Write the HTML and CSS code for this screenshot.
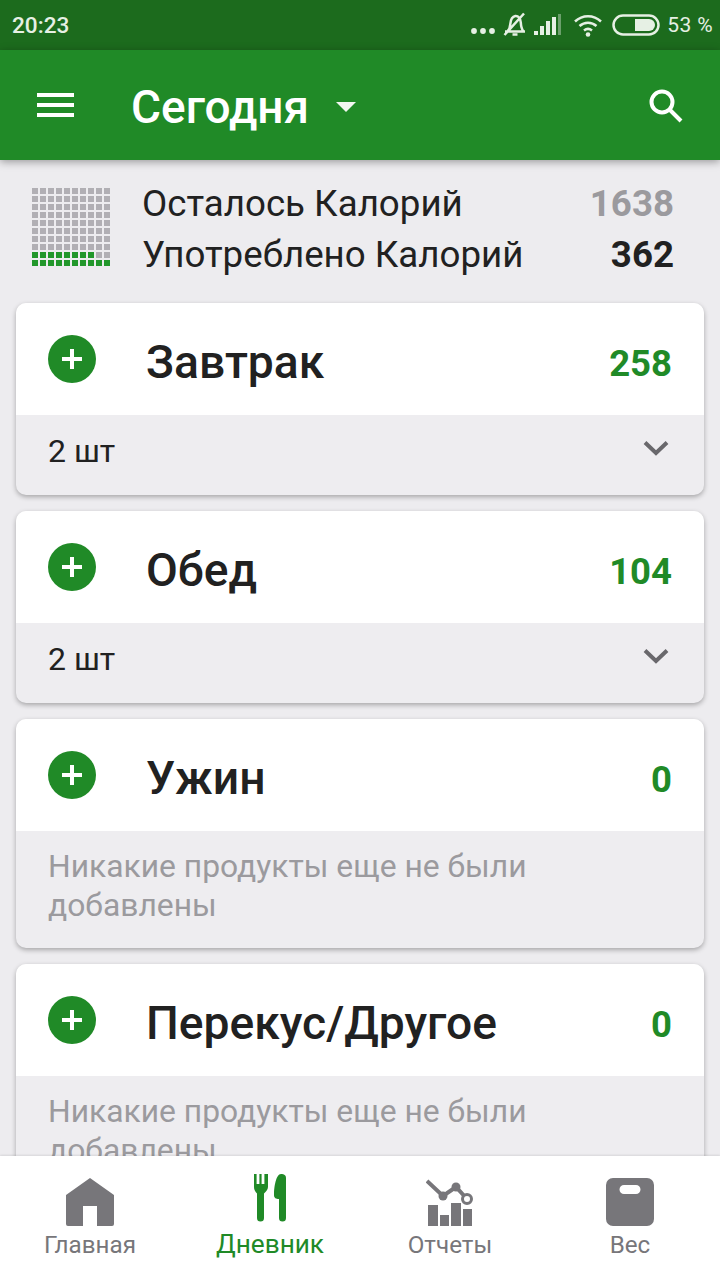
FILE: index.html
```html
<!DOCTYPE html>
<html lang="ru">

<head>
    <meta charset="UTF-8">
    <meta name="viewport" content="width=device-width, initial-scale=1.0">
    <title>Сегодня</title>
    <link rel="stylesheet" href="styles.css">
</head>

<body>
    <div class="statusbar">
        <span class="clock">20:23</span>
        <div class="status-icons">
            <svg class="dots" width="26" height="10" viewBox="0 0 26 10"><circle cx="4" cy="5" r="2.900"/><circle cx="13" cy="5" r="2.900"/><circle cx="22" cy="5" r="2.900"/></svg>
            <svg class="bell" width="24" height="26" viewBox="0 0 24 26"><path d="M2 19.500h20M4.500 19.500c2-2 2.500-4 2.800-7.500.4-4.500 2-7.500 5-8 3-.3 5.200 2 5.500 6.500.2 3.800 1 7 2.700 9M9.500 22.500h5M1.500 23 21 1.500"/></svg>
            <svg class="signal" width="28" height="22" viewBox="0 0 28 22"><rect x="0" y="17" width="4" height="4"/><rect x="6" y="12" width="4" height="9"/><rect x="12" y="7" width="4" height="14"/><rect x="18" y="3" width="4" height="18"/><rect x="24" y="0" width="3" height="21" opacity=".4"/></svg>
            <svg class="wifi" width="30" height="24" viewBox="0 0 30 24"><path d="M2 8.500c7.500-7 18.500-7 26 0M6.500 13c5-4.500 12-4.500 17 0M11 17.500c2.500-2 5.500-2 8 0"/><circle cx="15" cy="21.500" r="2.300" class="wifi-dot"/></svg>
            <svg class="battery" width="48" height="22" viewBox="0 0 48 22"><rect x="1.500" y="1.500" width="45" height="19" rx="9.500"/><path class="battery-fill" d="M23 5h14a6 6 0 0 1 0 12H23z"/></svg>
            <span class="battery-text">53 %</span>
        </div>
    </div>

    <header class="appbar">
        <svg class="menu-icon" width="37" height="24" viewBox="0 0 37 24"><rect y="0" width="37" height="4"/><rect y="10" width="37" height="4"/><rect y="20" width="37" height="4"/></svg>
        <h1 class="appbar-title">Сегодня</h1>
        <span class="title-arrow"></span>
        <svg class="search-icon" width="36" height="36" viewBox="0 0 36 36"><circle cx="14" cy="14" r="10.500"/><path d="M21.500 21.500 33 33"/></svg>
    </header>

    <main class="content">
        <section class="summary">
            <svg class="cal-grid" width="78" height="78" viewBox="0 0 78 78">
                <defs>
                    <pattern id="cell-gray" width="8" height="8" patternUnits="userSpaceOnUse"><rect class="cell-gray" width="6" height="6"/></pattern>
                    <pattern id="cell-green" width="8" height="8" patternUnits="userSpaceOnUse"><rect class="cell-green" width="6" height="6"/></pattern>
                </defs>
                <rect width="78" height="64" fill="url(#cell-gray)"/>
                <rect y="64" width="62" height="6" fill="url(#cell-green)"/>
                <rect x="64" y="64" width="14" height="6" fill="url(#cell-gray)"/>
                <rect y="72" width="78" height="6" fill="url(#cell-green)"/>
            </svg>
            <div class="summary-rows">
                <div class="summary-row"><span>Осталось Калорий</span><b class="left-value">1638</b></div>
                <div class="summary-row"><span>Употреблено Калорий</span><b>362</b></div>
            </div>
        </section>

        <article class="card">
            <div class="card-head">
                <span class="add-btn"></span>
                <h2>Завтрак</h2>
                <span class="kcal">258</span>
            </div>
            <div class="card-foot">
                <span>2 шт</span>
                <svg class="chevron" width="26" height="16" viewBox="0 0 26 16"><path d="M2 2.500 13 13 24 2.500"/></svg>
            </div>
        </article>

        <article class="card">
            <div class="card-head">
                <span class="add-btn"></span>
                <h2>Обед</h2>
                <span class="kcal">104</span>
            </div>
            <div class="card-foot">
                <span>2 шт</span>
                <svg class="chevron" width="26" height="16" viewBox="0 0 26 16"><path d="M2 2.500 13 13 24 2.500"/></svg>
            </div>
        </article>

        <article class="card">
            <div class="card-head">
                <span class="add-btn"></span>
                <h2>Ужин</h2>
                <span class="kcal">0</span>
            </div>
            <div class="card-empty">Никакие продукты еще не были добавлены</div>
        </article>

        <article class="card">
            <div class="card-head">
                <span class="add-btn"></span>
                <h2>Перекус/Другое</h2>
                <span class="kcal">0</span>
            </div>
            <div class="card-empty">Никакие продукты еще не были добавлены</div>
        </article>
    </main>

    <nav class="tabbar">
        <a class="tab" href="#">
            <svg width="48" height="48" viewBox="0 0 48 48"><path d="M24 0 48 17v29a2 2 0 0 1-2 2H31V28H17v20H2a2 2 0 0 1-2-2V17z"/></svg>
            <span>Главная</span>
        </a>
        <a class="tab tab-active" href="#">
            <svg width="34" height="48" viewBox="0 0 34 48"><path d="M1 0h2.600v10h2.800V0h2.200v10h2.800V0H15v13c0 3-2.500 5-4 6.500V44a3.500 3.500 0 0 1-7 0V19.500C2.500 18 1 16 1 13z"/><path d="M28 0c3 0 5 1 5 4v40a3.500 3.500 0 0 1-7 0V25c-3 0-5-1-5-4 0-8 2-21 7-21z"/></svg>
            <span>Дневник</span>
        </a>
        <a class="tab" href="#">
            <svg width="48" height="48" viewBox="0 0 48 48"><path class="chart-line" d="M1 3 17 18 30 9 41 21"/><circle cx="17" cy="18" r="4.500"/><circle cx="30" cy="9" r="4.500"/><circle class="chart-dot" cx="41" cy="21" r="4.500"/><rect x="2" y="27" width="10" height="21"/><rect x="14" y="37" width="9" height="11"/><rect x="25" y="25" width="10" height="23"/><rect x="37" y="31" width="9" height="17"/></svg>
            <span>Отчеты</span>
        </a>
        <a class="tab" href="#">
            <svg width="48" height="48" viewBox="0 0 48 48"><path fill-rule="evenodd" d="M7 0h34a7 7 0 0 1 7 7v34a7 7 0 0 1-7 7H7a7 7 0 0 1-7-7V7a7 7 0 0 1 7-7zm11 7a4.500 4.500 0 0 0 0 9h12a4.500 4.500 0 0 0 0-9z"/></svg>
            <span>Вес</span>
        </a>
    </nav>
</body>

</html>
```

FILE: styles.css
```css
* {
    box-sizing: border-box;
}

html,
body {
    margin: 0;
    padding: 0;
}

body {
    display: flex;
    flex-direction: column;
    width: 720px;
    height: 1280px;
    overflow: hidden;
    font-family: Roboto, "Noto Sans", sans-serif;
    background-color: #edecef;
    color: #212121;
}

/* status bar */
.statusbar {
    flex: 0 0 50px;
    display: flex;
    align-items: center;
    justify-content: space-between;
    padding: 0 7px 0 12px;
    background-color: #1c6b1d;
    color: #e6f0e4;
}

.clock {
    font-size: 22.6px;
    font-weight: 500;
}

.status-icons {
    display: flex;
    align-items: center;
}

.status-icons svg {
    fill: #e6f0e4;
}

.status-icons .dots {
    margin: 12px 7px 0 0;
}

.status-icons .bell {
    margin-right: 7px;
}

.status-icons .signal {
    margin-right: 11px;
}

.status-icons .wifi {
    margin-right: 9px;
}

.status-icons .battery {
    margin-right: 7px;
}

.status-icons .bell,
.status-icons .wifi path,
.status-icons .battery rect {
    fill: none;
    stroke: #e6f0e4;
    stroke-width: 2.500;
}

.status-icons .wifi-dot {
    fill: #e6f0e4;
    stroke: none;
}

.status-icons .battery .battery-fill {
    fill: #e6f0e4;
}

.battery-text {
    font-size: 21px;
    letter-spacing: 0.4px;
}

/* top bar */
.appbar {
    position: relative;
    z-index: 2;
    flex: 0 0 110px;
    display: flex;
    align-items: center;
    padding: 0 36px 0 37px;
    background-color: #208a27;
    box-shadow: 0 2px 8px rgba(0, 0, 0, 0.35);
    color: #fff;
}

.menu-icon {
    fill: #fff;
}

.appbar-title {
    margin: 4px 0 0 57px;
    font-size: 46px;
    font-weight: 500;
}

.title-arrow {
    width: 0;
    height: 0;
    margin: 4px 0 0 27px;
    border-left: 10px solid transparent;
    border-right: 10px solid transparent;
    border-top: 10px solid #f2f7f1;
}

.search-icon {
    margin: 2px 0 0 auto;
    fill: none;
    stroke: #fff;
    stroke-width: 4;
}

/* content */
.content {
    flex: 1;
    min-height: 0;
    overflow: hidden;
    padding: 0 16px;
}

.summary {
    display: flex;
    height: 143px;
    padding: 28px 30px 0 16px;
}

.cal-grid {
    flex: none;
}

.cell-gray {
    fill: #b1afb4;
}

.cell-green {
    fill: #22972b;
}

.summary-rows {
    flex: 1;
    margin: -10px 0 0 32px;
}

.summary-row {
    display: flex;
    justify-content: space-between;
    height: 51px;
    font-size: 36.7px;
    line-height: 51px;
}

.summary-row b {
    font-weight: 700;
}

.summary-row .left-value {
    color: #9b9a9e;
}

.card {
    margin-bottom: 16px;
    border-radius: 10px;
    overflow: hidden;
    background-color: #eeedf0;
    box-shadow: 0 2px 5px rgba(0, 0, 0, 0.3);
}

.card-head {
    display: flex;
    align-items: center;
    height: 112px;
    padding: 0 32px;
    background-color: #fff;
}

.card-head h2 {
    margin: 6px 0 0 50px;
    font-size: 46.2px;
    font-weight: 500;
}

.add-btn {
    position: relative;
    flex: none;
    width: 48px;
    height: 48px;
    border-radius: 50%;
    background-color: #208a27;
}

.add-btn::before,
.add-btn::after {
    content: "";
    position: absolute;
    background-color: #fff;
}

.add-btn::before {
    left: 14px;
    top: 22px;
    width: 20px;
    height: 4px;
}

.add-btn::after {
    left: 22px;
    top: 14px;
    width: 4px;
    height: 20px;
}

.kcal {
    margin: 8px 0 0 auto;
    color: #208a27;
    font-size: 36.5px;
    font-weight: 700;
}

.card-foot {
    display: flex;
    align-items: center;
    justify-content: space-between;
    height: 80px;
    padding: 0 35px 8px 32px;
    font-size: 32px;
}

.chevron {
    margin-top: -6px;
    fill: none;
    stroke: #69686c;
    stroke-width: 4;
}

.card-empty {
    height: 117px;
    padding: 16px 160px 0 32px;
    color: #9b9a9e;
    font-size: 31.8px;
    line-height: 39px;
}

/* bottom tabs */
.tabbar {
    flex: 0 0 124px;
    display: grid;
    grid-template-columns: 180px 180px 180px 180px;
    position: relative;
    z-index: 2;
    background-color: #fff;
    box-shadow: 0 -1px 2px rgba(0, 0, 0, 0.1);
}

.tab {
    display: flex;
    flex-direction: column;
    align-items: center;
    padding-top: 22px;
    color: #77767a;
    fill: #77767a;
    font-size: 24.2px;
    text-decoration: none;
}

.tab span {
    margin-top: 5px;
}

.tab-active {
    color: #208a27;
    fill: #208a27;
    padding-top: 18px;
    font-size: 26.2px;
}

.tab-active span {
    margin-top: 7px;
}

.chart-line {
    fill: none;
    stroke: #77767a;
    stroke-width: 4;
}

.chart-dot {
    fill: #fff;
    stroke: #77767a;
    stroke-width: 3;
}
```
